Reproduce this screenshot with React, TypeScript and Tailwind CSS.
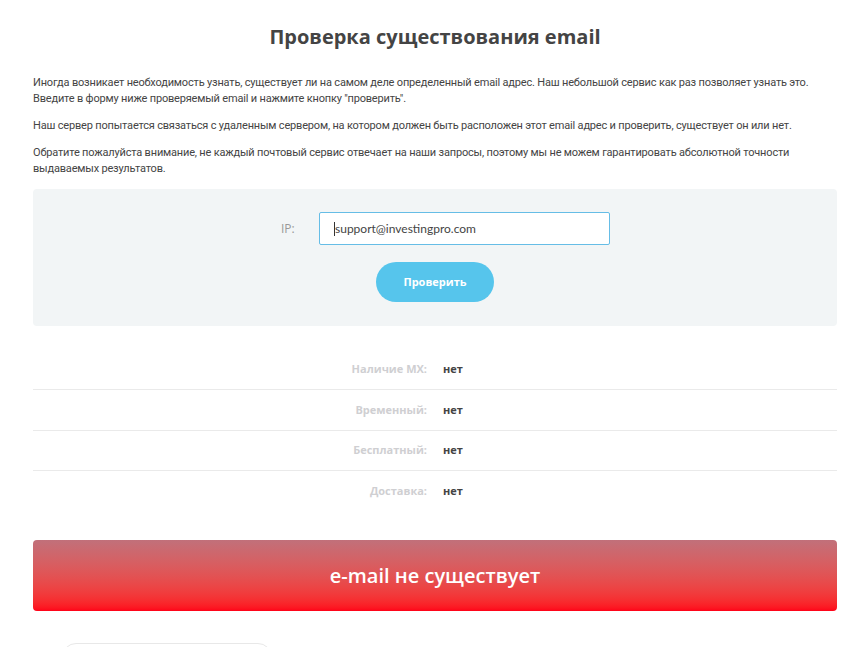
export default function App() {
  const rows = [
    { label: "Наличие MX:", value: "нет" },
    { label: "Временный:", value: "нет" },
    { label: "Бесплатный:", value: "нет" },
    { label: "Доставка:", value: "нет" },
  ]

  return (
    <div className="min-h-[647px] overflow-hidden bg-white pl-[33px] pr-[26px] font-['Roboto',sans-serif] text-[#444]">
      <h1 className="pt-[22px] text-center font-['Open_Sans',sans-serif] text-[20px] font-bold leading-[30px] text-[#444]">
        Проверка существования email
      </h1>

      <div className="mt-[23px] space-y-[11px] whitespace-nowrap text-[11px] leading-[16px] tracking-[-0.18px] text-[#444]">
        <p>
          Иногда возникает необходимость узнать, существует ли на самом деле определенный email адрес. Наш небольшой сервис как раз позволяет узнать это.
          <br />
          Введите в форму ниже проверяемый email и нажмите кнопку "проверить".
        </p>
        <p>
          Наш сервер попытается связаться с удаленным сервером, на котором должен быть расположен этот email адрес и проверить, существует он или нет.
        </p>
        <p>
          Обратите пожалуйста внимание, не каждый почтовый сервис отвечает на наши запросы, поэтому мы не можем гарантировать абсолютной точности
          <br />
          выдаваемых результатов.
        </p>
      </div>

      <div className="mt-[12px] flex h-[137px] flex-col items-center rounded-[4px] bg-[#f2f5f6] pt-[23px]">
        <div className="ml-[21px] flex items-center">
          <label className="w-[38px] font-['Open_Sans',sans-serif] text-[12px] text-[#999]">IP:</label>
          <div className="relative">
            <input
              className="h-[33px] w-[291px] rounded-[2px] border border-[#66bde6] bg-white px-[15px] font-['Lato',sans-serif] text-[12px] text-[#444] outline-none"
              defaultValue="support@investingpro.com"
            />
            <span className="absolute left-[15px] top-[10px] h-[14px] w-px bg-[#333]" />
          </div>
        </div>
        <button className="mt-[17px] h-[40px] w-[118px] rounded-full bg-[#56c5ec] font-['Open_Sans',sans-serif] text-[11px] font-bold text-white">
          Проверить
        </button>
      </div>

      <div className="mt-[24px]">
        {rows.map((row, i) => (
          <div
            key={row.label}
            className={`flex h-[40.33px] items-center ${i < rows.length - 1 ? "border-b border-[#eaeaea]" : ""}`}
          >
            <div className="w-[394px] text-right font-['Open_Sans',sans-serif] text-[11px] font-bold text-[#cfcfd2]">
              {row.label}
            </div>
            <div className="ml-[16px] font-['Open_Sans',sans-serif] text-[11px] font-bold text-[#444]">
              {row.value}
            </div>
          </div>
        ))}
      </div>

      <div className="mt-[29px] flex h-[71px] items-center justify-center rounded-[4px] bg-gradient-to-b from-[#c1707a] to-[#ff0018] font-['Open_Sans',sans-serif] text-[20px] font-semibold text-white">
        e-mail не существует
      </div>

      <div className="ml-[29px] mt-[32px] h-[20px] w-[210px] rounded-t-[14px] border border-[#e8e8e8]" />
    </div>
  )
}
